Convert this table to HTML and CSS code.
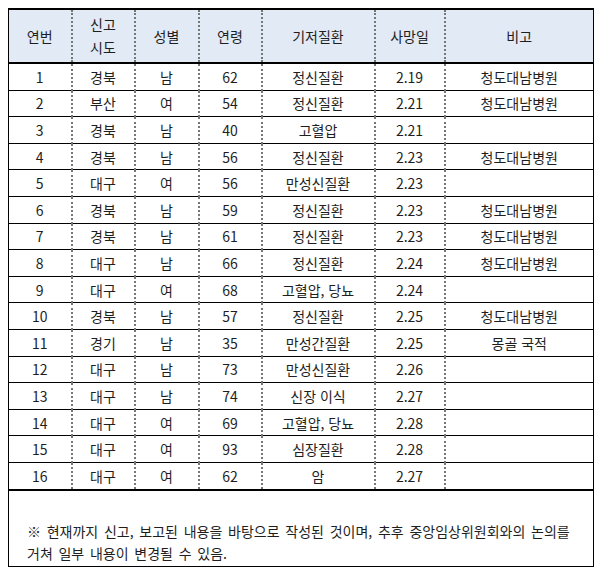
FILE: index.html
```html
<!DOCTYPE html>
<html lang="ko">
<head>
<meta charset="utf-8">
<link rel="stylesheet" href="styles.css">
</head>
<body>
<table class="deaths">
  <colgroup>
    <col class="c1"><col class="c2"><col class="c3"><col class="c4"><col class="c5"><col class="c6"><col class="c7">
  </colgroup>
  <thead>
    <tr class="head">
      <th>연번</th><th>신고<br>시도</th><th>성별</th><th>연령</th><th>기저질환</th><th>사망일</th><th>비고</th>
    </tr>
  </thead>
  <tbody>
    <tr><td>1</td><td>경북</td><td>남</td><td>62</td><td>정신질환</td><td>2.19</td><td>청도대남병원</td></tr>
    <tr><td>2</td><td>부산</td><td>여</td><td>54</td><td>정신질환</td><td>2.21</td><td>청도대남병원</td></tr>
    <tr><td>3</td><td>경북</td><td>남</td><td>40</td><td>고혈압</td><td>2.21</td><td></td></tr>
    <tr><td>4</td><td>경북</td><td>남</td><td>56</td><td>정신질환</td><td>2.23</td><td>청도대남병원</td></tr>
    <tr><td>5</td><td>대구</td><td>여</td><td>56</td><td>만성신질환</td><td>2.23</td><td></td></tr>
    <tr><td>6</td><td>경북</td><td>남</td><td>59</td><td>정신질환</td><td>2.23</td><td>청도대남병원</td></tr>
    <tr><td>7</td><td>경북</td><td>남</td><td>61</td><td>정신질환</td><td>2.23</td><td>청도대남병원</td></tr>
    <tr><td>8</td><td>대구</td><td>남</td><td>66</td><td>정신질환</td><td>2.24</td><td>청도대남병원</td></tr>
    <tr><td>9</td><td>대구</td><td>여</td><td>68</td><td>고혈압, 당뇨</td><td>2.24</td><td></td></tr>
    <tr><td>10</td><td>경북</td><td>남</td><td>57</td><td>정신질환</td><td>2.25</td><td>청도대남병원</td></tr>
    <tr><td>11</td><td>경기</td><td>남</td><td>35</td><td>만성간질환</td><td>2.25</td><td>몽골 국적</td></tr>
    <tr><td>12</td><td>대구</td><td>남</td><td>73</td><td>만성신질환</td><td>2.26</td><td></td></tr>
    <tr><td>13</td><td>대구</td><td>남</td><td>74</td><td>신장 이식</td><td>2.27</td><td></td></tr>
    <tr><td>14</td><td>대구</td><td>여</td><td>69</td><td>고혈압, 당뇨</td><td>2.28</td><td></td></tr>
    <tr><td>15</td><td>대구</td><td>여</td><td>93</td><td>심장질환</td><td>2.28</td><td></td></tr>
    <tr><td>16</td><td>대구</td><td>여</td><td>62</td><td>암</td><td>2.27</td><td></td></tr>
  </tbody>
  <tfoot>
    <tr class="note-row">
      <td colspan="7" class="note">※ 현재까지 신고, 보고된 내용을 바탕으로 작성된 것이며, 추후 중앙임상위원회와의 논의를<br>거쳐 일부 내용이 변경될 수 있음.</td>
    </tr>
  </tfoot>
</table>
</body>
</html>
```

FILE: styles.css
```css
html, body {
  background: #ffffff;
}
body {
  margin: 8px;
  font-family: "Noto Sans CJK KR", "Noto Sans", sans-serif;
  font-size: 14px;
  color: #1e1e1e;
}
.deaths {
  width: 585px;
  table-layout: fixed;
  border-collapse: collapse;
  border-top: 2px solid #000;
  border-left: 1px solid #000;
  border-right: 1px solid #000;
  border-bottom: 1px solid #000;
}
.c1 { width: 63px; }
.c2 { width: 63px; }
.c3 { width: 64px; }
.c4 { width: 63px; }
.c5 { width: 113px; }
.c6 { width: 70px; }
.c7 { width: 149px; }

.deaths th,
.deaths td {
  padding: 0;
  text-align: center;
  vertical-align: middle;
  font-weight: normal;
  border-left: 2px dotted #777;
  border-right: 2px dotted #777;
}
.deaths th:first-child,
.deaths td:first-child {
  border-left: 1px solid #000;
}
.deaths th:last-child,
.deaths td:last-child {
  border-right: 1px solid #000;
}
.head th {
  background: #e2eaf6;
  height: 52px;
  line-height: 23px;
  border-bottom: 2px solid #000;
}
.deaths tbody td {
  height: 25.6px;
  line-height: 18px;
  border-bottom: 1px solid #000;
}
.deaths tbody tr:last-child td {
  border-bottom: 2px solid #000;
}
.deaths td.note {
  text-align: left;
  border-left: 1px solid #000;
  border-right: 1px solid #000;
  padding: 28px 0 0 18px;
  line-height: 22.5px;
  height: 47px;
  word-spacing: 1.8px;
}
```
